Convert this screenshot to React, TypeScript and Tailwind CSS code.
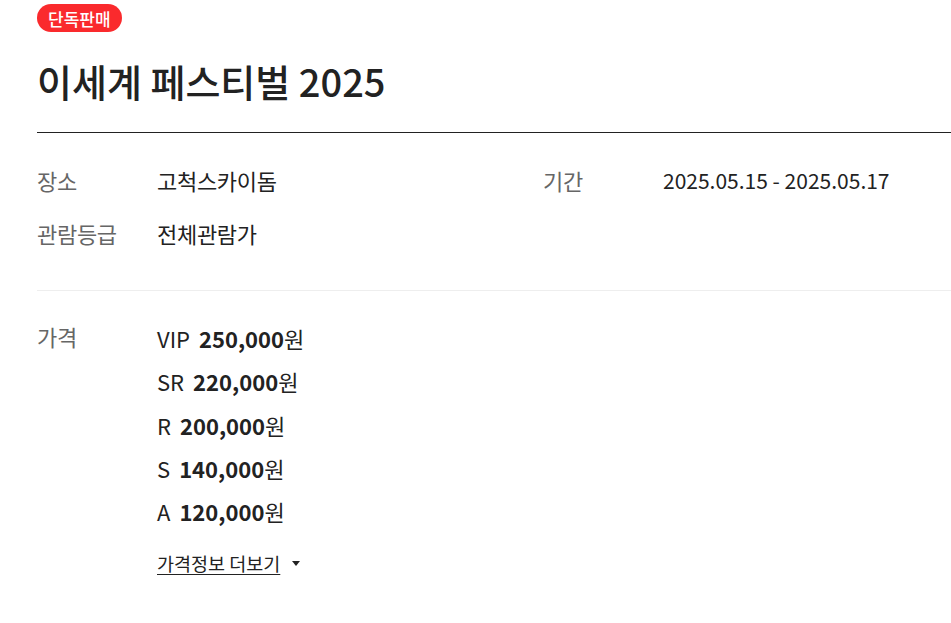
import React from "react";

const font = { fontFamily: '"Noto Sans CJK KR", "Noto Sans", sans-serif' };

function Row({ label, valueClass, children }: { label: string; valueClass: string; children: React.ReactNode }) {
  return (
    <div className="flex h-[30px] leading-[30px]">
      <div className="w-[120px] shrink-0 text-[#666] text-[22px] tracking-[-0.3px]">{label}</div>
      <div className={valueClass}>{children}</div>
    </div>
  );
}

const prices = [
  ["VIP", "250,000"],
  ["SR", "220,000"],
  ["R", "200,000"],
  ["S", "140,000"],
  ["A", "120,000"],
];

export default function App() {
  return (
    <div className="w-full min-h-[623px] overflow-hidden bg-white" style={font}>
      <div className="pl-[37px] pt-[4px]">
        <div className="inline-flex h-[28px] items-center rounded-full bg-[#fa2a2d] px-[11px] text-[17px] font-medium leading-none text-white">
          단독판매
        </div>
        <h1 className="mt-[25px] text-[38px] font-medium leading-[48px] text-[#222]">
          이세계 페스티벌 2025
        </h1>
        <div className="mt-[27px] border-t border-[#222]" />
        <div className="grid grid-cols-[506px_1fr] gap-y-[23px] pt-[32px] pb-[42px] border-b border-[#eee]">
          <Row label="장소" valueClass="text-[#222] text-[22px] tracking-[-0.3px]">
            고척스카이돔
          </Row>
          <Row label="기간" valueClass="text-[#222] text-[21px]">
            2025.05.15 - 2025.05.17
          </Row>
          <Row label="관람등급" valueClass="text-[#222] text-[22px] tracking-[-0.3px]">
            전체관람가
          </Row>
        </div>
        <div className="flex pt-[30px]">
          <div className="w-[120px] shrink-0 text-[#666] text-[22px] leading-[30px] tracking-[-0.3px]">가격</div>
          <div className="flex flex-col">
            <div className="flex flex-col gap-[13.3px] pt-[2px]">
              {prices.map(([g, p]) => (
                <div key={g} className="text-[22px] leading-[30px] text-[#222]">
                  <span className="mr-[9px]">{g}</span>
                  <span className="font-bold">{p}</span>원
                </div>
              ))}
            </div>
            <div className="mt-[25px] flex items-center gap-[12px] text-[18.5px] leading-[24px] text-[#222]">
              <span className="underline underline-offset-[3px]">가격정보 더보기</span>
              <svg width="8" height="5" viewBox="0 0 8 5">
                <path d="M0 0 H8 L4 5 Z" fill="#222" />
              </svg>
            </div>
          </div>
        </div>
      </div>
    </div>
  );
}
